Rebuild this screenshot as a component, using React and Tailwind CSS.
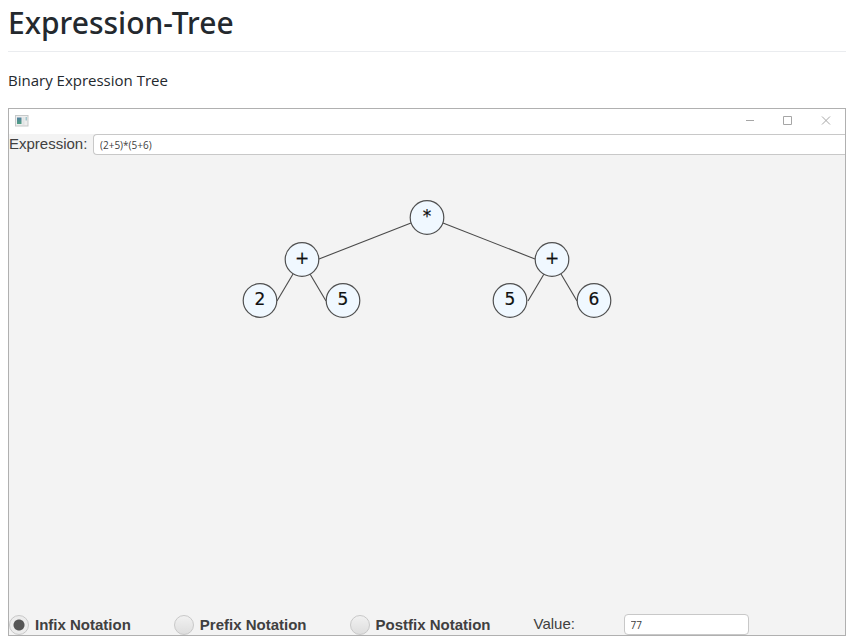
import { useState } from "react";

const NODES = [
  { x: 200, y: 62, label: "*" },
  { x: 75, y: 104, label: "+" },
  { x: 325, y: 104, label: "+" },
  { x: 33, y: 145, label: "2" },
  { x: 116, y: 145, label: "5" },
  { x: 283, y: 145, label: "5" },
  { x: 367, y: 145, label: "6" },
];

const EDGES = [
  [184, 68, 92, 104],
  [216, 68, 308, 104],
  [66, 119, 50, 146],
  [83, 119, 99, 146],
  [317, 119, 301, 146],
  [334, 119, 350, 146],
];

function ExpressionTree() {
  return (
    <svg
      width="400"
      height="180"
      viewBox="0 0 400 180"
      role="img"
      aria-label="Expression tree"
      className="font-['DejaVu_Sans',sans-serif] text-[17px]"
    >
      {EDGES.map(([x1, y1, x2, y2]) => (
        <line key={`${x1}-${y1}`} x1={x1} y1={y1} x2={x2} y2={y2} stroke="#4a4a4a" strokeWidth="1.1" />
      ))}
      {NODES.map(({ x, y, label }) => (
        <g key={x}>
          <circle cx={x} cy={y + 0.5} r="16.8" fill="#f0f8ff" stroke="#505050" strokeWidth="1.2" />
          <text x={x} y={y + 5} textAnchor="middle" fill="#111" stroke="#111" strokeWidth="0.2">
            {label}
          </text>
        </g>
      ))}
    </svg>
  );
}

function TitleBar() {
  return (
    <div className="flex h-[25px] items-center bg-white pr-3 pb-0.5 pl-1.5">
      <svg width="14" height="12" viewBox="0 0 14 12" aria-hidden="true">
        <defs>
          <linearGradient id="pane" x1="0" y1="0" x2="0" y2="1">
            <stop offset="0" stopColor="#527f9f" />
            <stop offset="1" stopColor="#4fa082" />
          </linearGradient>
        </defs>
        <rect x="0.5" y="0.5" width="12.5" height="10.5" fill="#eeeeee" stroke="#c6c9c9" />
        <rect x="2" y="2.5" width="4.5" height="6.5" fill="url(#pane)" />
        <rect x="7.5" y="2" width="2" height="8" fill="#e0e4e4" />
        <rect x="10.5" y="2" width="1.5" height="3.5" fill="#9fc6cc" />
      </svg>
      <div className="ml-auto flex gap-6 text-[#a6a6a6]">
        <button type="button" aria-label="Minimize" className="flex size-3.5 items-center justify-center">
          <svg width="10" height="10" viewBox="0 0 10 10" fill="none" stroke="currentColor">
            <path d="M1 4.5h8" />
          </svg>
        </button>
        <button type="button" aria-label="Maximize" className="flex size-3.5 items-center justify-center">
          <svg width="10" height="10" viewBox="0 0 10 10" fill="none" stroke="currentColor">
            <path d="M0.5 0.5h8v8h-8z" />
          </svg>
        </button>
        <button type="button" aria-label="Close" className="flex size-3.5 items-center justify-center">
          <svg width="10" height="10" viewBox="0 0 10 10" fill="none" stroke="currentColor">
            <path d="M1 0.5l8 8M9 0.5l-8 8" />
          </svg>
        </button>
      </div>
    </div>
  );
}

function NotationOption({ label, checked, onSelect }) {
  return (
    <label className="flex items-center gap-1.5 font-bold whitespace-nowrap">
      <input
        type="radio"
        name="notation"
        checked={checked}
        onChange={onSelect}
        className="size-5 appearance-none rounded-full border border-[#c8c8c8] bg-linear-to-b from-[#f1f1f1] to-[#dedede] checked:bg-[radial-gradient(circle,#555_0_5px,#ececec_6px)]"
      />
      {label}
    </label>
  );
}

export default function App() {
  const [notation, setNotation] = useState("Infix Notation");
  const [expression, setExpression] = useState("(2+5)*(5+6)");

  return (
    <main className="bg-white pr-[7px] pb-1.5 pl-2 font-['Noto_Sans',sans-serif] text-[#24292e]">
      <h1 className="border-b border-[#eaecef] pt-[3px] pb-[9px] text-[30px] leading-[39px] font-medium">
        Expression-Tree
      </h1>
      <p className="mt-4 mb-4 font-['Open_Sans',sans-serif] text-[15px] leading-6">Binary Expression Tree</p>

      <section className="border border-[#b0b0b0] bg-[#f3f3f3] font-['Liberation_Sans',sans-serif] text-[15px] leading-5 text-[#404040]">
        <TitleBar />
        <div className="flex h-[21px] items-center">
          <label htmlFor="expression" className="w-[84px] pb-0.5">
            Expression:
          </label>
          <input
            id="expression"
            value={expression}
            onChange={(e) => setExpression(e.target.value)}
            className="h-[21px] min-w-0 flex-1 rounded-l-sm border border-r-0 border-[#c8c8c8] bg-white px-1.5 font-['Open_Sans',sans-serif] text-[10px]"
          />
        </div>
        <div className="flex h-[459px] justify-center">
          <ExpressionTree />
        </div>
        <div className="flex h-[21px] items-center">
          <div className="flex gap-[43px]">
            {["Infix Notation", "Prefix Notation", "Postfix Notation"].map((name) => (
              <NotationOption
                key={name}
                label={name}
                checked={notation === name}
                onSelect={() => setNotation(name)}
              />
            ))}
          </div>
          <label htmlFor="value" className="ml-[43px] w-[90px] pb-0.5">
            Value:
          </label>
          <input
            id="value"
            readOnly
            value="77"
            className="h-[21px] w-[125px] rounded-sm border border-[#c8c8c8] bg-white px-1.5 font-['Open_Sans',sans-serif] text-[10px]"
          />
        </div>
      </section>
    </main>
  );
}
